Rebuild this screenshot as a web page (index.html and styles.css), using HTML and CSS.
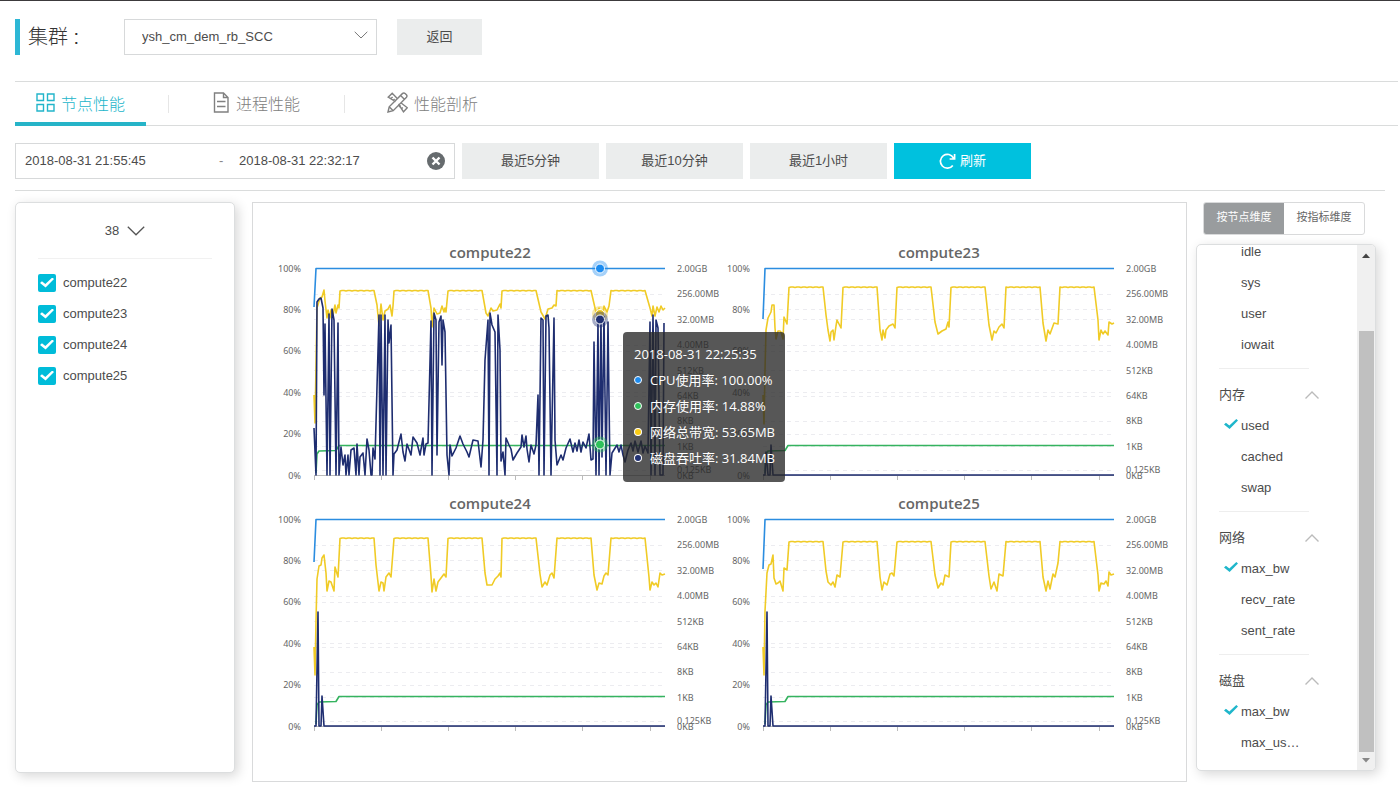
FILE: index.html
```html
<!DOCTYPE html>
<html lang="zh-CN">
<head>
<meta charset="utf-8">
<title>节点性能</title>
<link rel="stylesheet" href="styles.css">
</head>
<body>
<header class="topbar">
  <label class="topbar-title" for="cluster">集群 :</label>
  <div class="select-wrap">
    <select id="cluster" class="select"><option>ysh_cm_dem_rb_SCC</option></select>
    <svg class="select-arrow" width="14" height="8" viewBox="0 0 14 8"><path d="M.7.8 7 7 13.300.8"/></svg>
  </div>
  <button class="btn btn-back" type="button">返回</button>
</header>

<nav class="tabs">
  <a class="tab active" href="#node">
    <svg width="19" height="19" viewBox="0 0 19 19"><path d="M1 1h6.500v6.500H1zM11.500 1H18v6.500h-6.500zM1 11.500h6.500V18H1zM11.500 11.500H18V18h-6.500z"/></svg>
    节点性能
  </a>
  <i class="tab-sep"></i>
  <a class="tab" href="#process">
    <svg width="17" height="21" viewBox="0 0 17 21"><path d="M1.500 1h9l4.500 4.500V20H1.500zM10.500 1v4.500H15M4 9.500h8.500M4 14.500h8.500"/></svg>
    进程性能
  </a>
  <i class="tab-sep"></i>
  <a class="tab" href="#profile">
    <svg width="21" height="21" viewBox="0 0 21 21"><path d="M8.600 9.600 1.200 5.200 5.200 1.200 9.800 6M11.500 12l5 7.800 3.800-4-6.800-5.300M4 6.600 5.600 5M6.200 8.400 7.600 7M12 15l1.700-1.600M14 17.300l1.800-1.700M1 20l1.200-5.200L15.600 1.400q1.300-1 2.500.1l1.300 1.300q1.100 1.200.1 2.400L6.200 18.700zM13.600 3.400l4 4M2.200 14.800l4 3.900"/></svg>
    性能剖析
  </a>
</nav>

<form class="filters">
  <div class="range">
    <input class="range-input" type="text" aria-label="开始时间" value="2018-08-31 21:55:45">
    <span class="range-dash">-</span>
    <input class="range-input" type="text" aria-label="结束时间" value="2018-08-31 22:32:17">
    <button class="range-clear" type="button" aria-label="清除"><svg width="18" height="18" viewBox="0 0 18 18"><circle cx="9" cy="9" r="9" fill="#666b6e"/><path d="m5.500 5.500 7 7m0-7-7 7" stroke="#fff" stroke-width="2.400"/></svg></button>
  </div>
  <button class="btn btn-filter" type="button">最近5分钟</button>
  <button class="btn btn-filter" type="button">最近10分钟</button>
  <button class="btn btn-filter" type="button">最近1小时</button>
  <button class="btn btn-filter btn-primary" type="button">
    <svg width="17" height="17" viewBox="0 0 17 17"><path d="M13.800 12.400A6.900 6.900 0 1 1 14.500 5.200M15.600 1v5h-5"/></svg>刷新</button>
</form>

<main class="content">
  <aside class="card nodes">
    <button class="nodes-toggle" type="button">38<svg width="18" height="10" viewBox="0 0 18 10"><path d="m.8.8 8.200 8 8.200-8"/></svg></button>
    <label class="node"><input class="box" type="checkbox" checked>compute22</label>
    <label class="node"><input class="box" type="checkbox" checked>compute23</label>
    <label class="node"><input class="box" type="checkbox" checked>compute24</label>
    <label class="node"><input class="box" type="checkbox" checked>compute25</label>
  </aside>

  <section class="charts">
    <div class="chart" data-node="compute22">
      <div class="tooltip">
        <div>2018-08-31 22:25:35</div>
        <div class="tip-row"><i class="dot cpu"></i>CPU使用率: 100.00%</div>
        <div class="tip-row"><i class="dot mem"></i>内存使用率: 14.88%</div>
        <div class="tip-row"><i class="dot net"></i>网络总带宽: 53.65MB</div>
        <div class="tip-row"><i class="dot disk"></i>磁盘吞吐率: 31.84MB</div>
      </div>
    </div>
    <div class="chart" data-node="compute23"></div>
    <div class="chart" data-node="compute24"></div>
    <div class="chart" data-node="compute25"></div>
  </section>

  <aside class="side">
    <div class="switch">
      <button class="switch-btn on" type="button">按节点维度</button>
      <button class="switch-btn" type="button">按指标维度</button>
    </div>
    <div class="card metrics">
      <div class="metrics-view">
        <div class="group">
          <label class="metric"><input class="tick" type="checkbox">idle</label>
          <label class="metric"><input class="tick" type="checkbox">sys</label>
          <label class="metric"><input class="tick" type="checkbox">user</label>
          <label class="metric"><input class="tick" type="checkbox">iowait</label>
        </div>
        <div class="group">
          <button class="group-head" type="button">内存<svg width="14" height="8" viewBox="0 0 14 8"><path d="M.5 7.500 7 1l6.500 6.500"/></svg></button>
          <label class="metric"><input class="tick" type="checkbox" checked>used</label>
          <label class="metric"><input class="tick" type="checkbox">cached</label>
          <label class="metric"><input class="tick" type="checkbox">swap</label>
        </div>
        <div class="group">
          <button class="group-head" type="button">网络<svg width="14" height="8" viewBox="0 0 14 8"><path d="M.5 7.500 7 1l6.500 6.500"/></svg></button>
          <label class="metric"><input class="tick" type="checkbox" checked>max_bw</label>
          <label class="metric"><input class="tick" type="checkbox">recv_rate</label>
          <label class="metric"><input class="tick" type="checkbox">sent_rate</label>
        </div>
        <div class="group">
          <button class="group-head" type="button">磁盘<svg width="14" height="8" viewBox="0 0 14 8"><path d="M.5 7.500 7 1l6.500 6.500"/></svg></button>
          <label class="metric"><input class="tick" type="checkbox" checked>max_bw</label>
          <label class="metric"><input class="tick" type="checkbox">max_us…</label>
        </div>
      </div>
      <div class="scroll">
        <svg class="scroll-arrow" width="8" height="5" viewBox="0 0 8 5"><path d="M0 5 4 .5 8 5z" fill="#444"/></svg>
        <i class="scroll-track"></i>
        <i class="scroll-thumb"></i>
        <svg class="scroll-arrow" width="8" height="5" viewBox="0 0 8 5"><path d="M0 0 4 4.500 8 0z" fill="#888"/></svg>
      </div>
    </div>
  </aside>
</main>
<script src="charts.js"></script>
</body>
</html>
```

FILE: styles.css
```css
* { box-sizing: border-box; }
body {
  margin: 0;
  min-height: 100vh;
  padding: 18px 24px 6px 15px;
  border-top: 1px solid #3c3a3c;
  background: #fff;
  color: #4c4c4c;
  font: 13px/20px "Liberation Sans", "Noto Sans CJK SC", sans-serif;
}
button, input, select { font: inherit; color: inherit; }
button { padding: 0; border: 0; background: none; cursor: pointer; }
svg { display: block; fill: none; }

.topbar { display: flex; height: 36px; }
.topbar-title {
  width: 109px;
  padding-left: 8px;
  border-left: 5px solid #2db7d5;
  color: #333;
  font-size: 20px;
  font-weight: 300;
  line-height: 36px;
}
.select-wrap { position: relative; width: 253px; margin-right: 20px; }
.select {
  width: 100%;
  height: 36px;
  padding: 0 30px 0 17px;
  appearance: none;
  border: 1px solid #d7d9da;
  border-radius: 0;
  background: #fff;
}
.select-arrow { position: absolute; right: 9px; top: 12px; stroke: #777; }
.btn { background: #ebeded; }
.btn-back { width: 85px; }

.tabs {
  display: flex;
  gap: 22px;
  align-items: center;
  margin: 26px -22px 0 0;
  border-top: 1px solid #dadcdc;
  border-bottom: 1px solid #dadcdc;
}
.tab {
  display: flex;
  gap: 6px;
  align-items: center;
  justify-content: center;
  width: 131px;
  height: 44px;
  margin-bottom: -1px;
  padding-top: 5px;
  border-bottom: 4px solid transparent;
  color: #808080;
  font-size: 16px;
  font-weight: 300;
  text-decoration: none;
}
.tab svg { margin-bottom: 4px; stroke: #808080; stroke-width: 1.4; }
.tab.active { color: #22b5ca; border-bottom-color: #26b4c8; }
.tab.active svg { stroke: #22b5ca; }
.tab-sep { width: 1px; height: 18px; background: #e6e6e6; }

.filters {
  display: flex;
  gap: 7px;
  margin: 17px -9px 11px 0;
  padding-bottom: 11px;
  border-bottom: 1px solid #dadcdc;
}
.range {
  display: flex;
  align-items: center;
  width: 440px;
  height: 36px;
  padding: 0 9px;
  border: 1px solid #d7d9da;
}
.range-input { flex: 1; width: 0; padding: 0; border: 0; background: none; }
.range-input:first-child { flex: none; width: 194px; }
.range-dash { width: 20px; color: #888; }
.btn-filter { width: 137px; height: 36px; }
.btn-primary {
  display: flex;
  gap: 4px;
  align-items: center;
  justify-content: center;
  background: #00c1de;
  color: #fff;
}
.btn-primary svg { stroke: #fff; stroke-width: 1.7; }

.content { display: grid; grid-template-columns: 220px minmax(0, 1fr) 180px; }
.card {
  border: 1px solid #dcdedf;
  border-radius: 5px;
  background: #fff;
  box-shadow: 3px 3px 12px rgba(0, 0, 0, .16);
}
.nodes { margin-bottom: 9px; padding: 0 22px; }
.nodes-toggle {
  display: flex;
  gap: 8px;
  align-items: center;
  justify-content: center;
  width: 100%;
  height: 56px;
  margin-bottom: 8px;
  border-bottom: 1px solid #f1f1f1;
}
.nodes-toggle svg { stroke: #555; stroke-width: 1.3; }
.node { display: flex; gap: 7px; align-items: center; height: 31px; }
.box, .tick { position: relative; flex: none; margin: 0; appearance: none; }
.box { width: 18px; height: 18px; border-radius: 2px; background: #00bcd9; }
.box::after, .tick:checked::after {
  content: "";
  display: block;
  width: 14px;
  height: 10px;
  background: #fff;
  clip-path: polygon(0 55%, 14% 38%, 38% 65%, 88% 0, 100% 16%, 40% 100%);
}
.box::after { margin: 4px 2px; }

.charts {
  display: grid;
  grid-template-columns: 1fr 1fr;
  align-content: start;
  margin: 0 9px 0 17px;
  padding: 37px 23px 39px 12px;
  border: 1px solid #d9dadb;
}
.chart { position: relative; }
.chart > svg { width: 100%; overflow: visible; }
.chart text { fill: #666; font: 9px "Noto Sans", sans-serif; }
.chart .title { font: 600 15px "Open Sans", sans-serif; text-anchor: middle; fill: #666; }
.chart .left { text-anchor: end; }
.grid-line { stroke: #ececf0; stroke-dasharray: 4 4; }
.axis-line { stroke: #bbb; }
.series { stroke-width: 1.6; stroke-linejoin: round; }
.series.cpu { stroke: #2b8de0; }
.series.mem { stroke: #35b35f; }
.series.net { stroke: #f0cb26; }
.series.disk { stroke: #1e2d70; }
.tooltip {
  position: absolute;
  z-index: 1;
  left: 358px;
  top: 92px;
  width: 162px;
  padding: 9px 10px 11px 11px;
  border-radius: 4px;
  background: rgba(40, 40, 40, .78);
  color: #fff;
  font: 13px/26px "Open Sans", "Noto Sans CJK SC", sans-serif;
  white-space: nowrap;
}
.tip-row { display: flex; gap: 8px; align-items: center; }
.dot { width: 8px; height: 8px; border: 1px solid #fff; border-radius: 50%; }
.dot.cpu { background: #1d8cf0; }
.dot.mem { background: #2fc25b; }
.dot.net { background: #facc14; }
.dot.disk { background: #223273; }

.side { display: flex; flex-direction: column; gap: 9px; margin-bottom: 11px; }
.switch {
  display: flex;
  width: 162px;
  height: 33px;
  margin-left: 7px;
  overflow: hidden;
  border: 1px solid #d9dadb;
  border-radius: 3px;
}
.switch-btn { flex: 1; padding-bottom: 3px; color: #666; font-size: 11px; }
.switch-btn.on { background: #999c9e; color: #fff; }
.metrics { display: flex; flex: 1 1 0; min-height: 0; overflow: hidden; }
.metrics-view {
  display: flex;
  flex: 1;
  flex-direction: column;
  justify-content: flex-end;
  padding: 0 48px 12px 22px;
  overflow: hidden;
}
.group + .group { margin-top: 8px; border-top: 1px solid #eee; }
.group-head {
  display: flex;
  align-items: center;
  justify-content: space-between;
  width: 100px;
  height: 41px;
  padding-top: 10px;
}
.group-head svg { stroke: #bbb; stroke-width: 1.4; }
.metric { display: flex; gap: 4px; align-items: center; height: 31px; padding-left: 5px; }
.tick { width: 13px; height: 13px; }
.tick:checked::after { background: #1fb6cb; }
.scroll {
  display: flex;
  flex-direction: column;
  align-items: center;
  width: 18px;
  padding: 8px 0 7px;
  background: #f0f0f0;
}
.scroll-arrow { flex: none; }
.scroll-track { flex: 73; }
.scroll-thumb { flex: 421; width: 15px; margin-bottom: 6px; background: #c0c0c0; }
```

FILE: charts.js
```js
const NS = "http://www.w3.org/2000/svg";
const TOP = 28.5, BOTTOM = 235.5, LEFT = 49, RIGHT = 400;
const BYTES = [["2.00GB", 28.5], ["256.00MB", 54], ["32.00MB", 79.5], ["4.00MB", 105], ["512KB", 130.5],
  ["64KB", 156], ["8KB", 181], ["1KB", 206.5], ["0.125KB", 230], ["0KB", 235.5]];
const STARTS = [75, 129, 183, 237, 292, 346];
const ENDS = [109, 164, 218, 272, 327, 381];

const NODES = {
  compute22: {
    cpu: 67, plateau: 50.5, lead: "49,155 50,183 52,68 55,58 57,57 59,50 60,61 62,78 63,70 65,78 66,70 68,75 70,65 71,73 73,65 74,68",
    dips: ["112,65 114,86 116,64 118,80 120,71 123,69 125,65 127,76 128,66",
      "166,68 167,87 169,68 172,74 175,73 177,66 179,72 180,68 181,72",
      "221,73 223,76 226,68 228,71 232,70 235,64 236,68",
      "276,72 280,79 283,69 287,68 289,65 291,66",
      "330,68 332,76 334,68 337,80 339,66 342,72 344,66",
      "385,68 387,76 388,66 390,76 392,67 394,72 396,66 398,70 400,68"],
    disk: "49,188 51,235 52,62 54,59 56,58 58,68 59,155 60,84 62,235 64,74 65,235 67,69 69,80 71,235 73,83 74,235 76,207 78,225 80,215 81,235 83,215 84,235 86,210 89,208 91,235 92,204 94,235 95,217 98,213 100,235 102,199 104,210 106,235 107,235 108,208 110,219 114,75 115,235 116,75 118,235 120,75 121,235 123,80 124,103 126,85 128,235 129,214 132,210 134,202 136,194 138,212 140,221 142,204 146,215 148,197 152,203 155,215 158,198 159,215 161,204 163,203 166,81 167,235 169,73 171,80 172,215 174,82 176,76 177,125 178,80 180,92 182,215 184,235 185,205 187,216 191,208 195,196 198,204 202,212 204,217 208,200 213,201 216,227 218,200 220,120 223,80 224,235 225,73 227,85 230,92 232,235 233,75 235,110 236,221 238,212 240,235 241,198 244,205 246,209 248,220 252,213 256,207 257,195 259,207 261,196 262,209 264,222 266,205 269,214 271,205 273,155 274,235 276,78 278,80 279,235 281,76 283,75 284,88 286,235 289,78 290,200 292,225 296,215 298,220 301,208 305,199 308,212 310,203 312,211 314,200 316,212 318,202 321,208 324,194 326,220 328,219 329,102 331,235 333,82 334,235 336,78 337,217 339,76 341,235 343,82 345,235 347,213 352,205 354,212 356,205 358,215 360,222 363,210 366,203 368,211 370,201 373,212 376,201 378,213 380,206 383,213 385,82 386,235 388,75 390,235 391,80 393,88 395,235 398,235 399,83"
  },
  compute23: {
    cpu: 79, plateau: 47, lead: "49,155 50,184 51,130 52,90 54,78 57,72 58,65 60,65 61,88 62,99 64,91 66,91 67,92 69,99 70,77 73,84",
    dips: ["112,75 114,90 116,101 117,92 119,90 120,100 122,86 123,80 125,84 127,88",
      "166,90 168,100 169,90 171,98 172,90 175,86 179,84 181,88",
      "221,82 224,94 228,91 232,89 234,82 235,87",
      "275,85 278,100 280,91 282,93 285,87 288,84 290,88",
      "329,83 332,101 334,90 336,94 340,83 344,84",
      "384,80 385,100 387,90 389,94 391,91 394,95 395,82 398,84 400,83"],
    disk: "49,235 51,235 52,212 54,235 56,235 57,205 59,235 400,235"
  },
  compute24: {
    cpu: 71, plateau: 47, lead: "49,156 50,184 51,130 52,88 54,75 56,74 57,67 59,64 61,82 62,100 64,90 66,91 69,100 70,76 73,86",
    dips: ["111,74 114,100 116,91 118,92 119,100 121,86 124,82 126,86",
      "166,85 167,101 169,88 171,100 173,91 176,87 179,83 181,86",
      "220,82 222,94 227,94 230,88 233,85 235,82 236,86",
      "275,83 277,96 280,91 282,94 285,84 287,82 289,87",
      "329,84 332,99 334,92 337,93 339,85 341,82 343,84",
      "384,86 385,99 387,91 389,94 391,92 393,96 395,82 397,84 400,83"],
    disk: "49,235 51,235 53,121 54,235 56,235 57,205 59,235 400,235"
  },
  compute25: {
    cpu: 78, plateau: 50.5, lead: "49,156 50,184 51,120 53,82 55,74 57,73 59,64 60,87 62,93 64,92 66,90 69,100 70,77 73,79",
    dips: ["112,80 114,91 117,94 119,91 121,96 123,84 126,86",
      "166,86 168,99 170,91 173,94 176,83 178,82 180,85",
      "221,84 224,97 227,92 229,94 231,84 235,86",
      "275,85 277,98 280,91 283,100 285,83 289,85",
      "329,86 332,100 334,90 336,98 339,83 341,86 344,72",
      "384,84 385,100 387,92 390,93 392,90 394,95 395,81 397,84 400,83"],
    disk: "49,235 51,235 53,121 54,235 56,235 57,205 59,235 400,235"
  }
};

function add(parent, tag, attrs, text) {
  const el = document.createElementNS(NS, tag);
  for (const key in attrs) el.setAttribute(key, attrs[key]);
  if (text) el.textContent = text;
  parent.appendChild(el);
  return el;
}

// Joins the flat stretches and the dips between them into one polyline.
function bandwidth(node) {
  let points = node.lead;
  STARTS.forEach((start, i) => {
    for (let x = start; x <= ENDS[i]; x += 2) {
      points += ` ${x},${node.plateau + (x % 3 === 0 ? 0.5 : 0)}`;
    }
    points += " " + node.dips[i];
  });
  return points;
}

function marker(svg, y, color) {
  add(svg, "circle", { cx: 335, cy: y, r: 8, fill: color, opacity: 0.4 });
  add(svg, "circle", { cx: 335, cy: y, r: 4.5, fill: color, stroke: "#fff" });
}

document.querySelectorAll(".chart").forEach((box) => {
  const name = box.dataset.node;
  const node = NODES[name];
  const svg = add(box, "svg", { viewBox: "0 0 449 251", role: "img", "aria-label": name });
  add(svg, "text", { x: 225, y: 18, class: "title" }, name);
  for (let i = 0; i <= 5; i++) {
    const y = TOP + i * 41.4;
    add(svg, "text", { x: 36, y: y + 3, class: "left" }, 100 - i * 20 + "%");
    if (i && i < 5) add(svg, "path", { d: `M${LEFT} ${Math.floor(y) + 0.5}H${RIGHT}`, class: "grid-line" });
    add(svg, "path", { d: `M${Math.round(LEFT + i * 67.1) + 0.5} 236v4`, class: "axis-line" });
  }
  BYTES.forEach(([label, y], i) => {
    add(svg, "text", { x: 412, y: y + 3 }, label);
    if (i && i < 9) add(svg, "path", { d: `M${LEFT} ${Math.floor(y) + 0.5}H${RIGHT}`, class: "grid-line" });
  });
  add(svg, "path", { d: `M${LEFT} ${BOTTOM}H${RIGHT}`, class: "axis-line" });
  add(svg, "polyline", { points: `49,${node.cpu} 51,${TOP} ${RIGHT},${TOP}`, class: "series cpu" });
  add(svg, "polyline", { points: "51,233 52,214 54,211 71,210.500 74,205.500 400,205.500", class: "series mem" });
  add(svg, "polyline", { points: bandwidth(node), class: "series net" });
  add(svg, "polyline", { points: node.disk, class: "series disk" });
  if (name === "compute22") {
    marker(svg, 28.5, "#1d8cf0");
    marker(svg, 74, "#f0cb26");
    marker(svg, 79.5, "#223273");
    marker(svg, 204.5, "#2fc25b");
  }
});
```
